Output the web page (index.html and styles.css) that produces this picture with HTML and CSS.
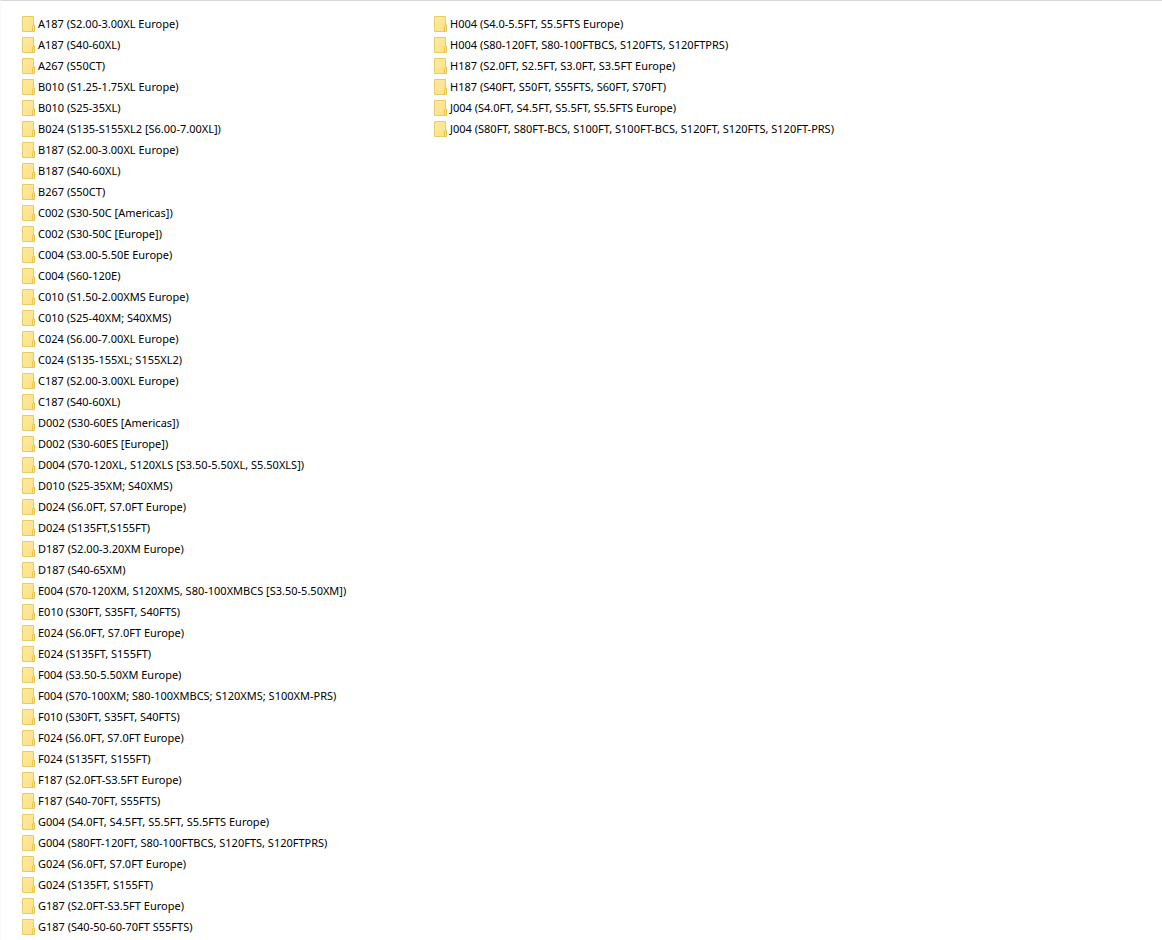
FILE: index.html
```html
<!DOCTYPE html>
<html lang="en">
<head>
    <meta charset="utf-8">
    <title>Folders</title>
    <link rel="stylesheet" href="styles.css">
</head>
<body>
    <svg class="sprite" aria-hidden="true">
        <defs>
            <linearGradient id="paper" x1="0" y1="0" x2="1" y2="1">
                <stop offset="0" stop-color="#ffe9a2"/>
                <stop offset="1" stop-color="#fce182"/>
            </linearGradient>
        </defs>
        <symbol id="folder" viewBox="0 0 13 16">
            <path d="M.5.5h11v15H.5z" fill="url(#paper)" stroke="#e6cc68"/>
            <path d="M10.5 15.5v-5l1-1.500h1v6.500z" fill="#ffe680" stroke="#e8c450"/>
        </symbol>
    </svg>

    <main class="pane">
        <ul class="folders">
            <li><a class="folder" href="#"><svg class="icon"><use href="#folder"/></svg>A187 (S2.00-3.00XL Europe)</a></li>
            <li><a class="folder" href="#"><svg class="icon"><use href="#folder"/></svg>A187 (S40-60XL)</a></li>
            <li><a class="folder" href="#"><svg class="icon"><use href="#folder"/></svg>A267 (S50CT)</a></li>
            <li><a class="folder" href="#"><svg class="icon"><use href="#folder"/></svg>B010 (S1.25-1.75XL Europe)</a></li>
            <li><a class="folder" href="#"><svg class="icon"><use href="#folder"/></svg>B010 (S25-35XL)</a></li>
            <li><a class="folder" href="#"><svg class="icon"><use href="#folder"/></svg>B024 (S135-S155XL2 [S6.00-7.00XL])</a></li>
            <li><a class="folder" href="#"><svg class="icon"><use href="#folder"/></svg>B187 (S2.00-3.00XL Europe)</a></li>
            <li><a class="folder" href="#"><svg class="icon"><use href="#folder"/></svg>B187 (S40-60XL)</a></li>
            <li><a class="folder" href="#"><svg class="icon"><use href="#folder"/></svg>B267 (S50CT)</a></li>
            <li><a class="folder" href="#"><svg class="icon"><use href="#folder"/></svg>C002 (S30-50C [Americas])</a></li>
            <li><a class="folder" href="#"><svg class="icon"><use href="#folder"/></svg>C002 (S30-50C [Europe])</a></li>
            <li><a class="folder" href="#"><svg class="icon"><use href="#folder"/></svg>C004 (S3.00-5.50E Europe)</a></li>
            <li><a class="folder" href="#"><svg class="icon"><use href="#folder"/></svg>C004 (S60-120E)</a></li>
            <li><a class="folder" href="#"><svg class="icon"><use href="#folder"/></svg>C010 (S1.50-2.00XMS Europe)</a></li>
            <li><a class="folder" href="#"><svg class="icon"><use href="#folder"/></svg>C010 (S25-40XM; S40XMS)</a></li>
            <li><a class="folder" href="#"><svg class="icon"><use href="#folder"/></svg>C024 (S6.00-7.00XL Europe)</a></li>
            <li><a class="folder" href="#"><svg class="icon"><use href="#folder"/></svg>C024 (S135-155XL; S155XL2)</a></li>
            <li><a class="folder" href="#"><svg class="icon"><use href="#folder"/></svg>C187 (S2.00-3.00XL Europe)</a></li>
            <li><a class="folder" href="#"><svg class="icon"><use href="#folder"/></svg>C187 (S40-60XL)</a></li>
            <li><a class="folder" href="#"><svg class="icon"><use href="#folder"/></svg>D002 (S30-60ES [Americas])</a></li>
            <li><a class="folder" href="#"><svg class="icon"><use href="#folder"/></svg>D002 (S30-60ES [Europe])</a></li>
            <li><a class="folder" href="#"><svg class="icon"><use href="#folder"/></svg>D004 (S70-120XL, S120XLS [S3.50-5.50XL, S5.50XLS])</a></li>
            <li><a class="folder" href="#"><svg class="icon"><use href="#folder"/></svg>D010 (S25-35XM; S40XMS)</a></li>
            <li><a class="folder" href="#"><svg class="icon"><use href="#folder"/></svg>D024 (S6.0FT, S7.0FT Europe)</a></li>
            <li><a class="folder" href="#"><svg class="icon"><use href="#folder"/></svg>D024 (S135FT,S155FT)</a></li>
            <li><a class="folder" href="#"><svg class="icon"><use href="#folder"/></svg>D187 (S2.00-3.20XM Europe)</a></li>
            <li><a class="folder" href="#"><svg class="icon"><use href="#folder"/></svg>D187 (S40-65XM)</a></li>
            <li><a class="folder" href="#"><svg class="icon"><use href="#folder"/></svg>E004 (S70-120XM, S120XMS, S80-100XMBCS [S3.50-5.50XM])</a></li>
            <li><a class="folder" href="#"><svg class="icon"><use href="#folder"/></svg>E010 (S30FT, S35FT, S40FTS)</a></li>
            <li><a class="folder" href="#"><svg class="icon"><use href="#folder"/></svg>E024 (S6.0FT, S7.0FT Europe)</a></li>
            <li><a class="folder" href="#"><svg class="icon"><use href="#folder"/></svg>E024 (S135FT, S155FT)</a></li>
            <li><a class="folder" href="#"><svg class="icon"><use href="#folder"/></svg>F004 (S3.50-5.50XM Europe)</a></li>
            <li><a class="folder" href="#"><svg class="icon"><use href="#folder"/></svg>F004 (S70-100XM; S80-100XMBCS; S120XMS; S100XM-PRS)</a></li>
            <li><a class="folder" href="#"><svg class="icon"><use href="#folder"/></svg>F010 (S30FT, S35FT, S40FTS)</a></li>
            <li><a class="folder" href="#"><svg class="icon"><use href="#folder"/></svg>F024 (S6.0FT, S7.0FT Europe)</a></li>
            <li><a class="folder" href="#"><svg class="icon"><use href="#folder"/></svg>F024 (S135FT, S155FT)</a></li>
            <li><a class="folder" href="#"><svg class="icon"><use href="#folder"/></svg>F187 (S2.0FT-S3.5FT Europe)</a></li>
            <li><a class="folder" href="#"><svg class="icon"><use href="#folder"/></svg>F187 (S40-70FT, S55FTS)</a></li>
            <li><a class="folder" href="#"><svg class="icon"><use href="#folder"/></svg>G004 (S4.0FT, S4.5FT, S5.5FT, S5.5FTS Europe)</a></li>
            <li><a class="folder" href="#"><svg class="icon"><use href="#folder"/></svg>G004 (S80FT-120FT, S80-100FTBCS, S120FTS, S120FTPRS)</a></li>
            <li><a class="folder" href="#"><svg class="icon"><use href="#folder"/></svg>G024 (S6.0FT, S7.0FT Europe)</a></li>
            <li><a class="folder" href="#"><svg class="icon"><use href="#folder"/></svg>G024 (S135FT, S155FT)</a></li>
            <li><a class="folder" href="#"><svg class="icon"><use href="#folder"/></svg>G187 (S2.0FT-S3.5FT Europe)</a></li>
            <li><a class="folder" href="#"><svg class="icon"><use href="#folder"/></svg>G187 (S40-50-60-70FT S55FTS)</a></li>
            <li><a class="folder" href="#"><svg class="icon"><use href="#folder"/></svg>H004 (S4.0-5.5FT, S5.5FTS Europe)</a></li>
            <li><a class="folder" href="#"><svg class="icon"><use href="#folder"/></svg>H004 (S80-120FT, S80-100FTBCS, S120FTS, S120FTPRS)</a></li>
            <li><a class="folder" href="#"><svg class="icon"><use href="#folder"/></svg>H187 (S2.0FT, S2.5FT, S3.0FT, S3.5FT Europe)</a></li>
            <li><a class="folder" href="#"><svg class="icon"><use href="#folder"/></svg>H187 (S40FT, S50FT, S55FTS, S60FT, S70FT)</a></li>
            <li><a class="folder" href="#"><svg class="icon"><use href="#folder"/></svg>J004 (S4.0FT, S4.5FT, S5.5FT, S5.5FTS Europe)</a></li>
            <li><a class="folder" href="#"><svg class="icon"><use href="#folder"/></svg>J004 (S80FT, S80FT-BCS, S100FT, S100FT-BCS, S120FT, S120FTS, S120FT-PRS)</a></li>
        </ul>
    </main>
</body>
</html>
```
FILE: styles.css
```css
body {
    margin: 0;
    background: #fff;
    color: #000;
    font-family: "Segoe UI", "Noto Sans", "Open Sans", sans-serif;
    font-size: 11px;
    line-height: 21px;
}

/* display: none would drop the gradient fill */
.sprite {
    display: block;
    width: 0;
    height: 0;
}

.pane {
    border-top: 1px solid #d9d9d9;
    border-left: 1px solid #fafafa;
}

/* fills the first column before starting the next */
.folders {
    display: grid;
    grid-template-rows: repeat(44, 21px);
    grid-auto-flow: column;
    grid-auto-columns: 412px;
    margin: 0;
    padding: 12px 21px 3px;
    list-style: none;
}

.folder {
    display: flex;
    align-items: center;
    gap: 3px;
    color: inherit;
    text-decoration: none;
    white-space: nowrap;
}

.icon {
    flex: none;
    width: 13px;
    height: 16px;
}
```
